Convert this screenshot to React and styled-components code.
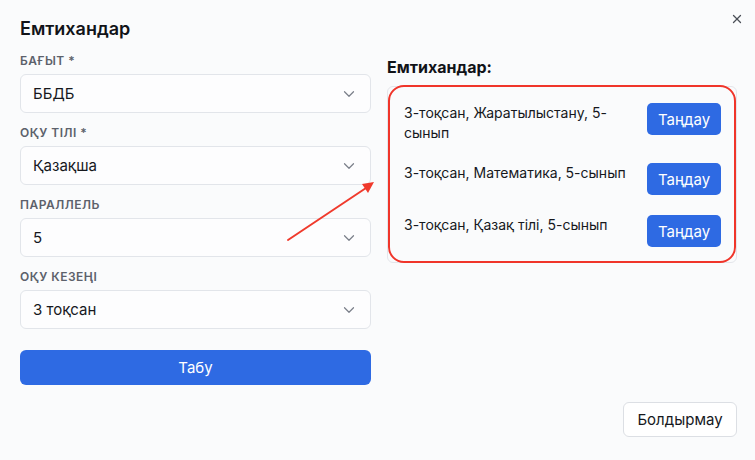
import React from "react";
import styled, { createGlobalStyle } from "styled-components";
import { ChevronDown, X } from "lucide-react";

const GlobalStyle = createGlobalStyle`
  html, body {
    margin: 0;
    padding: 0;
    background: #fafbfc;
    font-family: Inter, "Noto Sans", sans-serif;
    color: #16181d;
  }
  * { box-sizing: border-box; }
`;

const fields = [
  { label: "БАҒЫТ *", value: "ББДБ" },
  { label: "ОҚУ ТІЛІ *", value: "Қазақша" },
  { label: "ПАРАЛЛЕЛЬ", value: "5" },
  { label: "ОҚУ КЕЗЕҢІ", value: "3 тоқсан" },
];

const exams = [
  "3-тоқсан, Жаратылыстану, 5-сынып",
  "3-тоқсан, Математика, 5-сынып",
  "3-тоқсан, Қазақ тілі, 5-сынып",
];

const App = () => {
  return (
    <>
      <GlobalStyle />
      <Dialog>
        <Title>Емтихандар</Title>
        <CloseButton type="button">
          <X size={14} strokeWidth={2.2} />
        </CloseButton>

        <Body>
          <LeftColumn>
            {fields.map((f) => (
              <Field key={f.label}>
                <Label>{f.label}</Label>
                <Select>
                  <span>{f.value}</span>
                  <ChevronDown size={18} strokeWidth={1.6} color="#7a7f89" />
                </Select>
              </Field>
            ))}
            <PrimaryButton type="button">Табу</PrimaryButton>
          </LeftColumn>

          <RightColumn>
            <SectionTitle>Емтихандар:</SectionTitle>
            <ListWrap>
              <List>
                {exams.map((e) => (
                  <Item key={e}>
                    <ItemText>{e}</ItemText>
                    <SmallButton type="button">Таңдау</SmallButton>
                  </Item>
                ))}
              </List>
              <Highlight />
            </ListWrap>
          </RightColumn>
        </Body>

        <Footer>
          <GhostButton type="button">Болдырмау</GhostButton>
        </Footer>

        <Arrow width="755" height="460" viewBox="0 0 755 460">
          <line x1="288" y1="240" x2="366" y2="188" stroke="#f03a2c" strokeWidth="2" strokeLinecap="round" />
          <polygon points="374,182 362,184 368,193" fill="#f03a2c" />
        </Arrow>
      </Dialog>
    </>
  );
};

const Dialog = styled.div`
  position: relative;
  width: 755px;
  height: 460px;
  padding: 17px 18px 0 20px;
`;

const Title = styled.h2`
  margin: 0;
  font-size: 18px;
  line-height: 24px;
  font-weight: 600;
  color: #111318;
`;

const CloseButton = styled.button`
  position: absolute;
  top: 12px;
  right: 11px;
  width: 14px;
  height: 14px;
  padding: 0;
  border: none;
  background: transparent;
  color: #4b4f57;
  display: flex;
  align-items: center;
  justify-content: center;
`;

const Body = styled.div`
  margin-top: 12px;
  display: grid;
  grid-template-columns: 351px 350px;
  column-gap: 16px;
  align-items: start;
`;

const LeftColumn = styled.div`
  display: flex;
  flex-direction: column;
  gap: 12px;
`;

const Field = styled.div`
  display: flex;
  flex-direction: column;
  gap: 5px;
`;

const Label = styled.div`
  font-size: 12px;
  line-height: 16px;
  font-weight: 600;
  letter-spacing: 0.5px;
  color: #5c616b;
`;

const Select = styled.div`
  height: 39px;
  border: 1px solid #e2e5ea;
  border-radius: 6px;
  background: #fdfdfe;
  padding: 0 12px 0 12px;
  display: flex;
  align-items: center;
  justify-content: space-between;
  font-size: 15px;
  color: #16181d;
`;

const PrimaryButton = styled.button`
  margin-top: 9px;
  height: 35px;
  border: none;
  border-radius: 6px;
  background: #2e6ae3;
  color: #fff;
  font-family: inherit;
  font-size: 15px;
`;

const RightColumn = styled.div`
  padding-top: 4px;
  display: flex;
  flex-direction: column;
  gap: 9px;
`;

const SectionTitle = styled.div`
  font-size: 16px;
  line-height: 20px;
  font-weight: 700;
  color: #111318;
`;

const ListWrap = styled.div`
  position: relative;
`;

const List = styled.div`
  border: 1px solid #e4e6eb;
  border-radius: 6px;
  padding: 16px 15px 15px 16px;
  display: flex;
  flex-direction: column;
  gap: 20px;
`;

const Item = styled.div`
  display: flex;
  align-items: flex-start;
  justify-content: space-between;
  gap: 12px;
`;

const ItemText = styled.div`
  width: 228px;
  font-size: 14px;
  line-height: 20px;
  color: #16181d;
`;

const SmallButton = styled.button`
  flex: none;
  width: 74px;
  height: 32px;
  border: none;
  border-radius: 5px;
  background: #2e6ae3;
  color: #fff;
  font-family: inherit;
  font-size: 15px;
`;

const Highlight = styled.div`
  position: absolute;
  inset: -1px 1px 0 1px;
  border: 2px solid #f0352a;
  border-radius: 16px;
  pointer-events: none;
`;

const Footer = styled.div`
  margin-top: 17px;
  display: flex;
  justify-content: flex-end;
`;

const GhostButton = styled.button`
  width: 114px;
  height: 35px;
  border: 1px solid #dcdfe4;
  border-radius: 6px;
  background: #fff;
  color: #16181d;
  font-family: inherit;
  font-size: 15px;
`;

const Arrow = styled.svg`
  position: absolute;
  left: 0;
  top: 0;
  pointer-events: none;
`;

export default App;
